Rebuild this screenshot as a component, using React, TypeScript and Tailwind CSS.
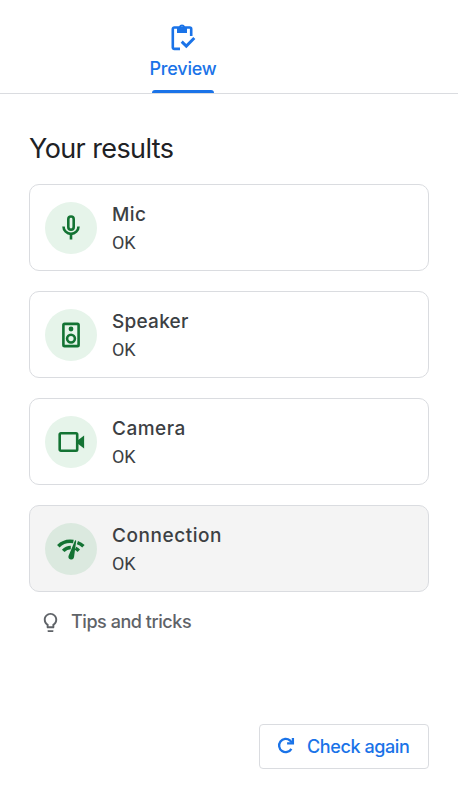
import React from "react";
import { MdLightbulbOutline } from "react-icons/md";

const MicIcon = () => (
  <svg viewBox="0 0 28 28" className="size-7" fill="none" stroke="currentColor" strokeWidth="2.6">
    <rect x="11.3" y="2.5" width="5.4" height="13.2" rx="2.7" />
    <path d="M6.5 12.4a7.5 7.5 0 0 0 15 0" />
    <path d="M14 20v5.5" />
  </svg>
);

const SpeakerIcon = () => (
  <svg viewBox="0 0 28 28" className="size-7" fill="none" stroke="currentColor" strokeWidth="2.6">
    <rect x="6.4" y="2.9" width="15.2" height="22.2" rx="1.2" />
    <circle cx="14" cy="17.6" r="3.9" />
    <circle cx="14" cy="8" r="2.4" fill="currentColor" stroke="none" />
  </svg>
);

const CameraIcon = () => (
  <svg viewBox="0 0 28 28" className="size-7" fill="none" stroke="currentColor" strokeWidth="2.6">
    <rect x="2.7" y="5.3" width="17.5" height="17.5" rx="1.2" />
    <path d="M20.5 12.6l6.6-5v12.8l-6.6-5z" fill="currentColor" stroke="none" />
  </svg>
);

const ConnectionIcon = () => (
  <svg viewBox="0 0 28 28" className="size-7" fill="none" stroke="currentColor" strokeWidth="3.5">
    <path d="M1.3 11.2C5.2 7.3 11 5.6 16.4 6.5" />
    <path d="M20.4 7.6c2.3.8 4.3 2 6 3.6" />
    <path d="M6.2 15.9c2.1-2.2 4.6-3.3 7.6-3.3" />
    <path d="M18.5 13.3c1.2.6 2.3 1.4 3.3 2.4" />
    <path
      d="M18 5.4c.6-.4 1.3 0 1.2.7l-2.2 16.2a2.8 2.8 0 0 1-5.5-1.2z"
      fill="currentColor"
      stroke="none"
    />
  </svg>
);

const ClipboardIcon = () => (
  <svg viewBox="0 0 26 28" className="h-7 w-[26px]" fill="none" stroke="currentColor" strokeWidth="2.6">
    <path d="M10 25.9H4.3a1.5 1.5 0 0 1-1.5-1.5V6a1.5 1.5 0 0 1 1.5-1.5h15.4A1.5 1.5 0 0 1 21.2 6v7" />
    <path d="M11.7 18.6l4.6 4.5 8-8.2" strokeWidth="2.9" />
    <path
      fillRule="evenodd"
      d="M7 4h1.9a3.2 3.2 0 0 1 6.2 0H17v6H7zM12 3a1.1 1.1 0 1 0 0 2.2A1.1 1.1 0 0 0 12 3z"
      fill="currentColor"
      stroke="none"
    />
  </svg>
);

const results = [
  { label: "Mic", icon: MicIcon, tracking: "tracking-[0.4px]" },
  { label: "Speaker", icon: SpeakerIcon, tracking: "tracking-[0.25px]" },
  { label: "Camera", icon: CameraIcon, tracking: "tracking-[0.5px]" },
  { label: "Connection", icon: ConnectionIcon, tracking: "tracking-[0.55px]", active: true },
];

const App = () => {
  return (
    <div className="h-[792px] w-full bg-white font-['Inter',sans-serif] text-[#3c4043]">
      {/* Tab bar */}
      <header className="flex h-[94px] justify-center border-b border-[#dadce0] pr-[92px]">
        <div className="flex flex-col items-center pt-[23px] text-[#1a73e8]">
          <ClipboardIcon />
          <span className="mt-[6px] text-[18px] leading-6 font-medium tracking-[-0.2px] whitespace-nowrap">Preview</span>
          <span className="mt-[9px] h-[3px] w-[62px] rounded-t-[3px] bg-[#1a73e8]" />
        </div>
      </header>

      <main className="px-[29px] pt-[37px]">
        <h1 className="text-[27px] leading-9 tracking-[-0.6px] whitespace-nowrap text-[#202124]">Your results</h1>

        <div className="mt-[17px] flex flex-col gap-5">
          {results.map(({ label, icon: Icon, tracking, active }) => (
            <div
              key={label}
              className={`flex h-[87px] items-center rounded-[10px] border border-[#dadce0] pl-[15px] ${active ? "bg-[#f4f4f4]" : "bg-white"}`}
            >
              <div
                className={`flex size-[52px] items-center justify-center rounded-full text-[#137333] ${active ? "bg-[#dbe9df]" : "bg-[#e6f4ea]"}`}
              >
                <Icon />
              </div>
              <div className="ml-[15px] pt-[2px]">
                <div className={`text-[19px] leading-7 font-medium ${tracking}`}>{label}</div>
                <div className="font-['Roboto',sans-serif] text-[18px] leading-7 tracking-[-0.2px]">OK</div>
              </div>
            </div>
          ))}
        </div>

        <div className="mt-[18px] flex h-6 items-center pl-[10px] text-[#5f6368]">
          <MdLightbulbOutline className="size-[23px]" />
          <span className="ml-[9px] text-[18px] leading-6 font-medium tracking-[-0.45px]">Tips and tricks</span>
        </div>

        <div className="mt-[90px] flex justify-end">
          <button className="flex h-[45px] w-[170px] items-center rounded-[4px] border border-[#dadce0] pl-[17px] text-[#1a73e8]">
            <svg viewBox="0.5 0.5 18 18" className="mb-[2px] size-[18px]" fill="none" stroke="currentColor" strokeWidth="2.3">
              <path d="M14.9 12.4A6.6 6.6 0 1 1 13.5 4l2 2" />
              <path d="M10.6 6.9h5.8V1.4" />
            </svg>
            <span className="ml-[12px] text-[18px] leading-6 font-medium tracking-[-0.4px] whitespace-nowrap">Check again</span>
          </button>
        </div>
      </main>
    </div>
  );
};

export default App;
